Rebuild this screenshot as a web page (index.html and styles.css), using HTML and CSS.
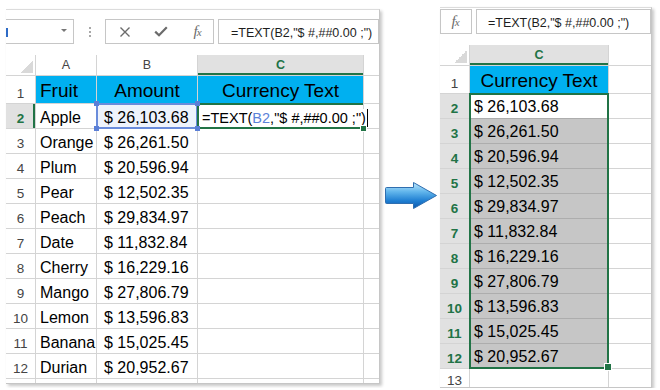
FILE: index.html
```html
<!DOCTYPE html>
<html>
<head>
<meta charset="utf-8" />
<title>TEXT currency</title>
<link rel="stylesheet" href="styles.css">
</head>
<body>
<div class="shot">

    <!-- before: formula being typed in C2 -->
    <div class="sheet sheet-left">
        <div class="bar">
            <div class="namebox"><span class="mark"></span><span class="drop"></span></div>
            <div class="grip"><i></i><i></i><i></i></div>
            <div class="btns">
                <span class="btn"><svg width="12" height="12" viewBox="0 0 12 12"><path d="M1.5 1.5L10.5 10.5M10.5 1.5L1.5 10.5" stroke="#6b6b6b" stroke-width="1.4" fill="none"/></svg></span>
                <span class="btn"><svg width="14" height="11" viewBox="0 0 14 11"><path d="M1.2 5.6L5 9.2L12.8 1.2" stroke="#6b6b6b" stroke-width="2.2" fill="none"/></svg></span>
                <span class="btn fx">f<small>x</small></span>
            </div>
            <div class="formula">=TEXT(B2,"$ #,##0.00 ;")</div>
        </div>
        <div class="grid grid-left">
            <div class="corner"></div><div class="ch">A</div><div class="ch">B</div><div class="ch ch-on">C</div><div class="ch"></div>
            <div class="rh">1</div><div class="c hd">Fruit</div><div class="c hd mid">Amount</div><div class="c hd mid">Currency Text</div><div class="c"></div>
            <div class="rh rh-on">2</div><div class="c">Apple</div>
            <div class="c val ref">$ 26,103.68<i class="tl"></i><i class="bl"></i></div>
            <div class="c edit"><span class="txt">=TEXT(<span class="b2">B2</span>,"$ #,##0.00 ;")</span><i class="rtl"></i><i class="rbl"></i><i class="fill"></i></div>
            <div class="c"></div>
            <div class="rh">3</div><div class="c">Orange</div><div class="c val">$ 26,261.50</div><div class="c"></div><div class="c"></div>
            <div class="rh">4</div><div class="c">Plum</div><div class="c val">$ 20,596.94</div><div class="c"></div><div class="c"></div>
            <div class="rh">5</div><div class="c">Pear</div><div class="c val">$ 12,502.35</div><div class="c"></div><div class="c"></div>
            <div class="rh">6</div><div class="c">Peach</div><div class="c val">$ 29,834.97</div><div class="c"></div><div class="c"></div>
            <div class="rh">7</div><div class="c">Date</div><div class="c val">$ 11,832.84</div><div class="c"></div><div class="c"></div>
            <div class="rh">8</div><div class="c">Cherry</div><div class="c val">$ 16,229.16</div><div class="c"></div><div class="c"></div>
            <div class="rh">9</div><div class="c">Mango</div><div class="c val">$ 27,806.79</div><div class="c"></div><div class="c"></div>
            <div class="rh">10</div><div class="c">Lemon</div><div class="c val">$ 13,596.83</div><div class="c"></div><div class="c"></div>
            <div class="rh">11</div><div class="c">Banana</div><div class="c val">$ 15,025.45</div><div class="c"></div><div class="c"></div>
            <div class="rh">12</div><div class="c">Durian</div><div class="c val">$ 20,952.67</div><div class="c"></div><div class="c"></div>
            <div class="rh"></div><div class="c"></div><div class="c"></div><div class="c"></div><div class="c"></div>
        </div>
    </div>

    <svg class="arrow" width="54" height="29" viewBox="0 0 54 29">
        <defs>
            <linearGradient id="ag" x1="0" y1="0" x2="0" y2="1">
                <stop offset="0" stop-color="#bfe7fc"/>
                <stop offset="0.35" stop-color="#62b6ec"/>
                <stop offset="0.7" stop-color="#1f7fd2"/>
                <stop offset="1" stop-color="#0a56ad"/>
            </linearGradient>
        </defs>
        <path d="M2.5 6.5H29.5V1.5L52.5 14.5L29.5 27.5V22.5H2.5Q1.5 22.5 1.5 21.5V7.5Q1.5 6.5 2.5 6.5Z" fill="url(#ag)" stroke="#2f6eaf" stroke-width="1"/>
    </svg>

    <!-- after: results filled down C2:C12 -->
    <div class="sheet sheet-right">
        <div class="bar">
            <div class="fxbox fx">f<small>x</small></div>
            <div class="formula">=TEXT(B2,"$ #,##0.00 ;")</div>
        </div>
        <div class="grid-wrap">
            <div class="grid grid-right">
                <div class="corner"></div><div class="ch ch-on">C</div><div class="ch"></div>
                <div class="rh">1</div><div class="c hd mid">Currency Text</div><div class="c"></div>
                <div class="rh rh-on">2</div><div class="c">$ 26,103.68</div><div class="c"></div>
                <div class="rh rh-on">3</div><div class="c sel">$ 26,261.50</div><div class="c"></div>
                <div class="rh rh-on">4</div><div class="c sel">$ 20,596.94</div><div class="c"></div>
                <div class="rh rh-on">5</div><div class="c sel">$ 12,502.35</div><div class="c"></div>
                <div class="rh rh-on">6</div><div class="c sel">$ 29,834.97</div><div class="c"></div>
                <div class="rh rh-on">7</div><div class="c sel">$ 11,832.84</div><div class="c"></div>
                <div class="rh rh-on">8</div><div class="c sel">$ 16,229.16</div><div class="c"></div>
                <div class="rh rh-on">9</div><div class="c sel">$ 27,806.79</div><div class="c"></div>
                <div class="rh rh-on">10</div><div class="c sel">$ 13,596.83</div><div class="c"></div>
                <div class="rh rh-on">11</div><div class="c sel">$ 15,025.45</div><div class="c"></div>
                <div class="rh rh-on">12</div><div class="c sel">$ 20,952.67</div><div class="c"></div>
                <div class="rh rh-last">13</div><div class="c"></div><div class="c"></div>
            </div>
            <div class="selbox"></div>
        </div>
    </div>

</div>
</body>
</html>
```

FILE: styles.css
```css
*{box-sizing:border-box;}
body{margin:0;background:#fff;font-family:"Liberation Sans",Arial,sans-serif;color:#000;}
.shot{display:flex;align-items:flex-start;padding-left:6px;}

/* sheet windows */
.sheet{position:relative;overflow:hidden;background:#fff;border-top:1px solid #dcdcdc;border-right:1px solid #c6c6c6;border-bottom:1px solid #c6c6c6;box-shadow:2px 2px 3px rgba(0,0,0,.22);}
.sheet-left{width:374px;height:375px;margin-top:9px;}
.sheet-right{width:212px;height:381px;margin-top:7px;}
.arrow{display:block;margin:181px 2px 0 4px;}

/* formula bar */
.bar{display:flex;height:25px;margin-bottom:11px;}
.sheet-left .bar{margin-top:9px;}
.sheet-right .bar{margin-top:1px;}
.namebox{position:relative;width:68px;border:1px solid #c6c6c6;border-left:0;}
.namebox .mark{position:absolute;left:0;top:8px;width:2px;height:9px;background:#2e6bc6;}
.namebox .drop{position:absolute;right:6px;top:9px;border-left:3px solid transparent;border-right:3px solid transparent;border-top:3px solid #777;}
.grip{width:31px;display:flex;flex-direction:column;align-items:center;justify-content:center;gap:2px;}
.grip i{display:block;width:2px;height:2px;background:#a8a8a8;}
.btns{width:109px;display:flex;padding-left:1px;border:1px solid #c6c6c6;overflow:hidden;}
.btn{flex:0 0 36px;display:flex;align-items:center;justify-content:center;}
.fx{font-family:"Liberation Serif","Times New Roman",serif;font-style:italic;font-size:15px;color:#6b6b6b;letter-spacing:-1px;}
.fx small{font-size:11px;}
.fxbox{width:32px;margin-right:4px;border:1px solid #c6c6c6;display:flex;align-items:center;justify-content:center;padding-right:2px;}
.formula{flex:1;margin-left:4px;border:1px solid #c6c6c6;font-size:12.5px;line-height:17px;padding:5px 0 0 12px;white-space:nowrap;overflow:hidden;color:#1e1e1e;}
.sheet-right .formula{margin-left:0;padding-left:11px;}

/* grid */
.grid{display:grid;gap:1px;background:#d4d4d4;}
.grid-left{grid-template-columns:29px 60px 100px 165px 1fr;grid-template-rows:20px 27px repeat(12,24px);}
.grid-right{grid-template-columns:29px 138px 1fr;grid-template-rows:20px 27px repeat(12,24px);}
.grid-wrap{position:relative;}

.corner{position:relative;background:#fff;}
.corner::after{content:"";position:absolute;right:2px;bottom:2px;width:13px;height:13px;background:linear-gradient(135deg,transparent 50%,#d9d9d9 50%);}
.ch{display:flex;align-items:center;justify-content:center;background:#fff;font-size:12.5px;color:#444;}
.ch-on{background:#e1e1e1;color:#217346;font-weight:bold;box-shadow:inset 0 -2px 0 #217346;}
.rh{display:flex;align-items:flex-end;justify-content:center;padding-bottom:3px;background:#fff;font-size:13.5px;line-height:13.5px;color:#444;}
.rh-last{align-items:flex-start;padding:5px 0 0;}
.rh-on{background:#e1e1e1;color:#217346;font-weight:bold;}
.sheet-left .rh-on{box-shadow:inset -2px 0 0 #217346;}

.c{display:flex;align-items:flex-end;padding:0 0 2px 4px;background:#fff;font-size:16px;line-height:16px;white-space:nowrap;}
.grid-right .c{padding-bottom:3px;}
.val{padding-left:7px;}
.hd{background:#00b0f0;font-size:19px;line-height:19px;}
.grid .hd{padding-bottom:3px;}
.mid{justify-content:center;padding-left:0;}
.sel{background:#c6c6c6;box-shadow:0 -1px 0 #adadad;}

/* B2 reference highlight */
.ref{position:relative;z-index:1;background:#eef3fc;box-shadow:0 0 0 1px #6a8cdb,inset 0 0 0 1px #6a8cdb;}
.ref i,.edit .rtl,.edit .rbl{position:absolute;width:5px;height:5px;background:#5b7fd6;}
.ref .tl{left:-3px;top:-3px;}
.ref .bl{left:-3px;bottom:-3px;}
.edit .rtl{left:-3px;top:-3px;}
.edit .rbl{left:-3px;bottom:-3px;}

/* C2 in edit mode */
.edit{position:relative;z-index:2;padding-bottom:1px;box-shadow:-1px 0 0 #217346,0 -1px 0 #217346,0 1px 0 #217346,inset 1px 0 0 #217346,inset 0 1px 0 #217346,inset 0 -1px 0 #217346;}
.edit .txt{background:#fff;font-size:14.5px;line-height:18px;padding-right:1px;border-right:1px solid #000;}
.edit .b2{color:#5b82d9;}
.edit .fill{position:absolute;right:-3px;bottom:-3px;width:5px;height:5px;background:#217346;outline:1px solid #fff;}

/* filled range C2:C12 */
.selbox{position:absolute;left:29px;top:48px;width:140px;height:276px;border:2px solid #217346;}
.selbox::after{content:"";position:absolute;right:-4px;bottom:-3px;width:6px;height:6px;background:#217346;outline:1px solid #fff;}
```
